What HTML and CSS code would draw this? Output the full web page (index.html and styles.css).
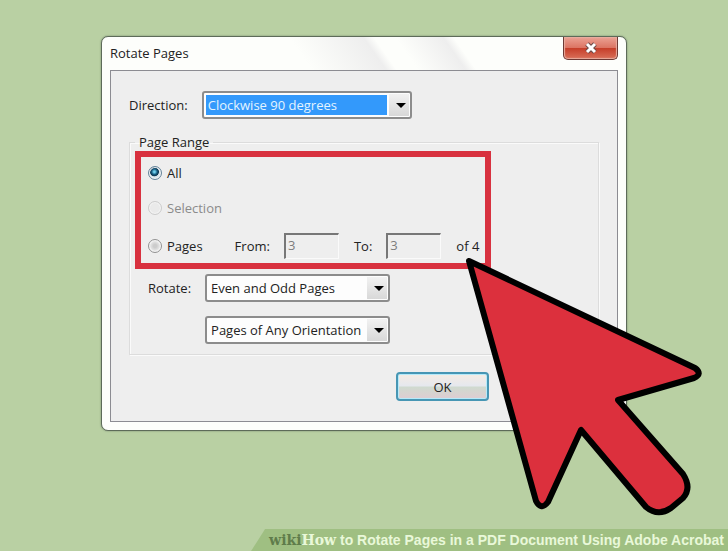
FILE: index.html
```html
<!doctype html>
<html lang="en">
    <head>
        <meta charset="utf-8">
        <title>Rotate Pages</title>
        <link rel="stylesheet" href="styles.css">
    </head>
    <body>
        <main class="stage">
            <form class="dialog">
                <div class="titlebar">
                    <h1 class="title">Rotate Pages</h1>
                    <button type="button" class="close" aria-label="Close">
                        <svg width="14" height="12" viewBox="0 0 14 12">
                            <path d="M3 2 L11 10 M11 2 L3 10" stroke="#6b4a47" stroke-width="5"/>
                            <path d="M3 2 L11 10 M11 2 L3 10" stroke="#fff" stroke-width="3"/>
                        </svg>
                    </button>
                </div>
                <div class="client">
                    <div class="row direction">
                        <label for="direction">Direction:</label>
                        <span class="combo focus">
                            <select id="direction">
                                <option>Clockwise 90 degrees</option>
                            </select>
                        </span>
                    </div>
                    <fieldset class="range">
                        <legend>Page Range</legend>
                        <div class="highlight">
                            <div class="row">
                                <input type="radio" name="range" id="all" checked>
                                <label for="all">All</label>
                            </div>
                            <div class="row off">
                                <input type="radio" name="range" id="selection" disabled>
                                <label for="selection">Selection</label>
                            </div>
                            <div class="row pages">
                                <input type="radio" name="range" id="pages">
                                <label for="pages">Pages</label>
                                <label for="from" class="from">From:</label>
                                <input type="text" id="from" class="num" value="3" disabled>
                                <label for="to">To:</label>
                                <input type="text" id="to" class="num" value="3" disabled>
                                <span>of 4</span>
                            </div>
                        </div>
                        <div class="rotate">
                            <label for="rotate">Rotate:</label>
                            <span class="combo">
                                <select id="rotate">
                                    <option>Even and Odd Pages</option>
                                </select>
                            </span>
                            <span class="combo second">
                                <select id="orientation" aria-label="Orientation">
                                    <option>Pages of Any Orientation</option>
                                </select>
                            </span>
                        </div>
                    </fieldset>
                    <div class="actions">
                        <button type="submit" class="ok">OK</button>
                    </div>
                </div>
                <svg class="pointer" width="250" height="270" viewBox="460 252 250 270">
                    <path d="M469 261 L695 368 Q703 374 694 378 L618 400 L683 474 Q692 488 683 498 L671 508 Q658 517 646 507 L581 430 L548 502 Q541 511 536 501 Z" fill="#dc303d" stroke="#000" stroke-width="6" stroke-linejoin="round"/>
                </svg>
            </form>
            <footer class="caption">
                <span class="wiki">wiki</span><span class="how">How</span> to Rotate Pages in a PDF Document Using Adobe Acrobat
            </footer>
        </main>
    </body>
</html>
```

FILE: styles.css
```css
*{
    box-sizing: border-box;
}
body{
    margin: 0;
    background: #b9d0a3;
    color: #222;
    font: 13px/20px "Open Sans", "Noto Sans", sans-serif;
}
.stage{
    display: flex;
    flex-direction: column;
    min-height: 100vh;
    padding-top: 36px;
}
.dialog{
    position: relative;
    margin: 0 101px 24px;
    padding: 0 8px 8px;
    border: 1px solid #5d6b59;
    border-radius: 7px;
    background: #fdfefb;
    box-shadow: 0 0 2px #71806b;
}
.titlebar{
    display: flex;
    justify-content: space-between;
    align-items: flex-start;
    height: 33px;
    background: linear-gradient(55deg, transparent 38%, #eee 52%, #fdfefb 54%, #fdfefb 58%, #eee 67%, transparent 69%);
}
.title{
    margin: 0;
    padding-top: 6px;
    font-size: 13px;
    font-weight: 400;
}
.close{
    display: flex;
    align-items: center;
    justify-content: center;
    width: 55px;
    height: 23px;
    padding: 0;
    border: 1px solid #6d3a35;
    border-top: 0;
    border-radius: 0 0 5px 5px;
    background: linear-gradient(#eba294, #dc7564 48%, #c63f2a 52%, #d9705a);
    box-shadow: inset 0 0 1px 1px #e9ad9f;
}
.client{
    padding: 20px 18px;
    border: 1px solid #8c8c92;
    background: #eee;
}
.row{
    display: flex;
    align-items: center;
}
.direction{
    gap: 14px;
}
.combo{
    position: relative;
    display: flex;
    width: 185px;
    height: 28px;
    padding: 2px;
    border: 2px solid #8c8c8c;
    border-radius: 3px;
    background: #fdfdfd;
}
.combo::before{
    content: "";
    position: absolute;
    top: 1px;
    right: 1px;
    bottom: 1px;
    width: 20px;
    background: linear-gradient(#f2f2f2, #d8d8d8);
}
.combo::after{
    content: "";
    position: absolute;
    top: 10px;
    right: 4px;
    border: 5px solid transparent;
    border-top-color: #000;
    border-bottom: 0;
}
select{
    appearance: none;
    flex: 1;
    min-width: 0;
    padding: 0 2px;
    border: 0;
    background: none;
    color: inherit;
    font: inherit;
}
.focus{
    width: 210px;
}
.focus select{
    margin-right: 21px;
    background: #3399fb;
    color: #e4f4ff;
}
.range{
    margin: 13px 0 0;
    padding: 0 5px 10px;
    border: 1px solid #dcdcdc;
    box-shadow: inset 1px 1px #fafafa, 1px 1px #fafafa;
}
legend{
    padding: 0 4px;
}
.highlight{
    display: flex;
    flex-direction: column;
    gap: 15px;
    width: fit-content;
    margin-top: -1px;
    padding: 6px 6px 4px;
    border: 6px solid #d8313f;
}
input[type="radio"]{
    appearance: none;
    width: 14px;
    height: 14px;
    margin: 0 5px 0 1px;
    border: 1px solid #929292;
    border-radius: 50%;
    background: radial-gradient(#ccc 20%, #f5f5f5 75%);
    box-shadow: inset 0 0 0 1px #f4f4f4;
}
input[type="radio"]:checked{
    border-color: #64839a;
    background: radial-gradient(circle at 45% 40%, #6fd0ee 8%, #155a80 28%, #0d3650 42%, #d5e3ec 50%);
}
input[type="radio"]:disabled{
    border-color: #ccc;
    background: #eaeaea;
}
.off{
    color: #8b8b8b;
}
.pages .from{
    margin-left: 32px;
}
.num{
    width: 55px;
    height: 26px;
    margin: 0 15px 0 14px;
    padding: 0 2px 3px;
    border: 2px solid #777;
    border-right: 1px solid #fafafa;
    border-bottom: 1px solid #fafafa;
    background: #eee;
    color: #7d7d7d;
    font: inherit;
}
.rotate{
    display: grid;
    grid-template-columns: max-content max-content;
    align-items: center;
    gap: 14px;
    margin: 5px 0 0 13px;
}
.second{
    grid-column: 2;
}
.actions{
    display: flex;
    justify-content: flex-end;
    padding: 17px 110px 0 0;
}
.ok{
    width: 93px;
    height: 29px;
    padding: 0;
    border: 2px solid #4796b4;
    border-radius: 4px;
    background: linear-gradient(#f5ece3, #e5e8ee 48%, #cfdacf 52%, #dfccd2);
    box-shadow: inset 0 0 0 1px #b5eafa;
    color: inherit;
    font: inherit;
}
/* the arrow lies over the lower right corner of the dialog */
.pointer{
    position: absolute;
    top: 215px;
    left: 358px;
    pointer-events: none;
}
.caption{
    align-self: flex-end;
    margin-top: auto;
    padding: 0 4px 0 18px;
    background: #9fbf82;
    clip-path: polygon(14px 0, 100% 0, 100% 100%, 0 100%);
    color: #e9f8d9;
    font: bold 14px/22px "Liberation Sans", Arial, sans-serif;
}
.wiki, .how{
    font: bold 14px/22px "DejaVu Serif", serif;
}
.wiki{
    color: #5f7c4b;
}
```
